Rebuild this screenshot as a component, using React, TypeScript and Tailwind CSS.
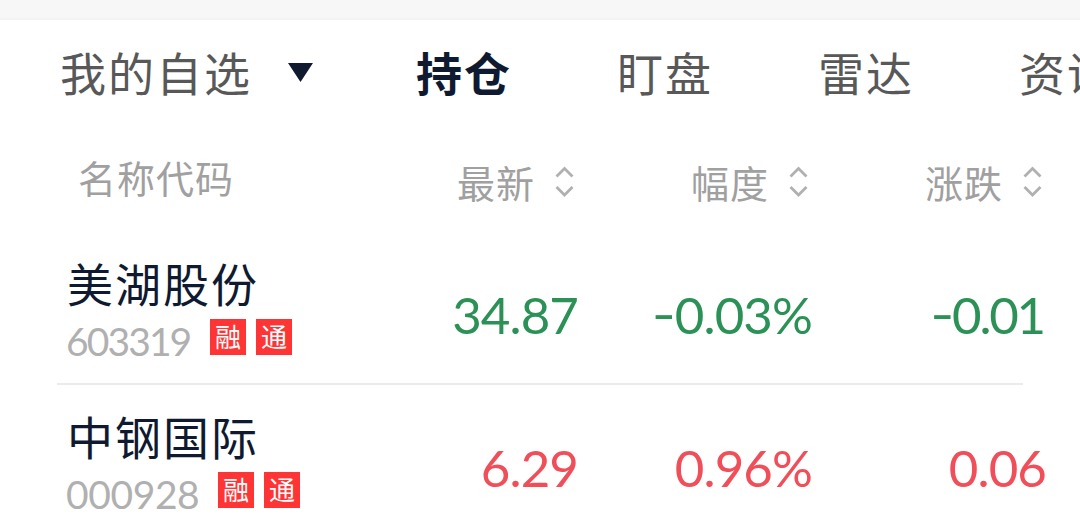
import clsx from "clsx";

interface Stock {
  code: string;
  name: string;
  tags: string[];
  latest: string;
  percent: string;
  change: string;
  isUp: boolean;
  codeClass: string;
}

const tabs = ["持仓", "盯盘", "雷达", "资讯"];

const columns = ["最新", "幅度", "涨跌"];

const stocks: Stock[] = [
  {
    code: "603319",
    name: "美湖股份",
    tags: ["融", "通"],
    latest: "34.87",
    percent: "-0.03%",
    change: "-0.01",
    isUp: false,
    codeClass: "w-[144px] tracking-[-1.9px]",
  },
  {
    code: "000928",
    name: "中钢国际",
    tags: ["融", "通"],
    latest: "6.29",
    percent: "0.96%",
    change: "0.06",
    isUp: true,
    codeClass: "w-[152px] tracking-[-0.4px]",
  },
];

const SortIcon = () => (
  <svg
    className="w-5 h-8 shrink-0"
    viewBox="0 0 20 32"
    fill="none"
    stroke="#b0b0b0"
    strokeWidth="2.8"
  >
    <path d="M1.5 10.5 9.5 2.5 17.5 10.5" />
    <path d="M1.5 21 9.5 29 17.5 21" />
  </svg>
);

const TabBar = () => (
  <div className="flex h-[110px] pl-[60px] whitespace-nowrap text-[46px] leading-[108px] tracking-[2px] text-[#585858]">
    <div className="flex w-[356px] shrink-0">
      <span>我的自选</span>
      <svg className="w-[25px] h-[19px] ml-9 mt-[43px]" viewBox="0 0 25 19">
        <path d="M0 0H25L12.5 19Z" fill="#0f1a30" />
      </svg>
    </div>
    {tabs.map((tab, index) => (
      <span
        key={tab}
        className={clsx(
          "w-[201px] shrink-0",
          index === 0 && "font-bold text-[#0f1a30]"
        )}
      >
        {tab}
      </span>
    ))}
  </div>
);

const TableHeader = () => (
  <div className="flex h-[102px] whitespace-nowrap text-[38px] leading-[50px] tracking-[1px] text-[#a0a0a0]">
    <span className="w-[343px] shrink-0 pl-[78px] pt-[23px]">名称代码</span>
    {columns.map((column) => (
      <div
        key={column}
        className="flex w-[234px] shrink-0 items-start justify-end gap-5 pt-7 pr-0.5"
      >
        <span>{column}</span>
        <div className="pt-2">
          <SortIcon />
        </div>
      </div>
    ))}
  </div>
);

const Price = ({ value, isUp }: { value: string; isUp: boolean }) => {
  const isNegative = value.startsWith("-");

  return (
    <span
      className={clsx(
        "w-[234px] shrink-0 pt-12 text-right text-[51px] leading-[70px]",
        value.endsWith("1") ? "pr-0.5 tracking-[-2.2px]" : "tracking-[-0.9px]",
        isUp ? "text-[#f04f5a]" : "text-[#2b9156]"
      )}
    >
      {isNegative && (
        <span className="inline-block origin-right scale-x-130 -translate-y-0.5">
          -
        </span>
      )}
      {isNegative ? value.slice(1) : value}
    </span>
  );
};

const StockRow = ({ stock }: { stock: Stock }) => {
  return (
    <div className="h-[153px]">
      <div className="flex h-[151px] whitespace-nowrap">
        <div className="w-[344px] shrink-0 pl-[66px] pt-[23px]">
          <div className="h-[60px] pl-px text-[46px] leading-[60px] tracking-[2px] text-[#0f1a30]">
            {stock.name}
          </div>
          <div className="flex h-10 items-start">
            <span
              className={clsx(
                "shrink-0 text-[39px] leading-[52px] text-[#b0b0b0]",
                stock.codeClass
              )}
            >
              {stock.code}
            </span>
            <div className="flex gap-2.5 pt-1">
              {stock.tags.map((tag) => (
                <span
                  key={tag}
                  className="size-9 bg-[#ff3535] text-center text-[26px] leading-[37px] text-white"
                >
                  {tag}
                </span>
              ))}
            </div>
          </div>
        </div>
        <Price value={stock.latest} isUp={stock.isUp} />
        <Price value={stock.percent} isUp={stock.isUp} />
        <Price value={stock.change} isUp={stock.isUp} />
      </div>
      <div className="h-0.5 ml-[57px] w-[966px] bg-[#ebebeb]" />
    </div>
  );
};

const App = () => {
  return (
    <div className="h-[528px] w-[1080px] overflow-hidden bg-white font-[Lato,'Noto_Sans_CJK_SC',sans-serif]">
      <div className="h-5 border-b-2 border-[#f3f3f3] bg-[#f7f7f7]" />
      <TabBar />
      <TableHeader />
      {stocks.map((stock) => (
        <StockRow key={stock.code} stock={stock} />
      ))}
    </div>
  );
};

export default App;
